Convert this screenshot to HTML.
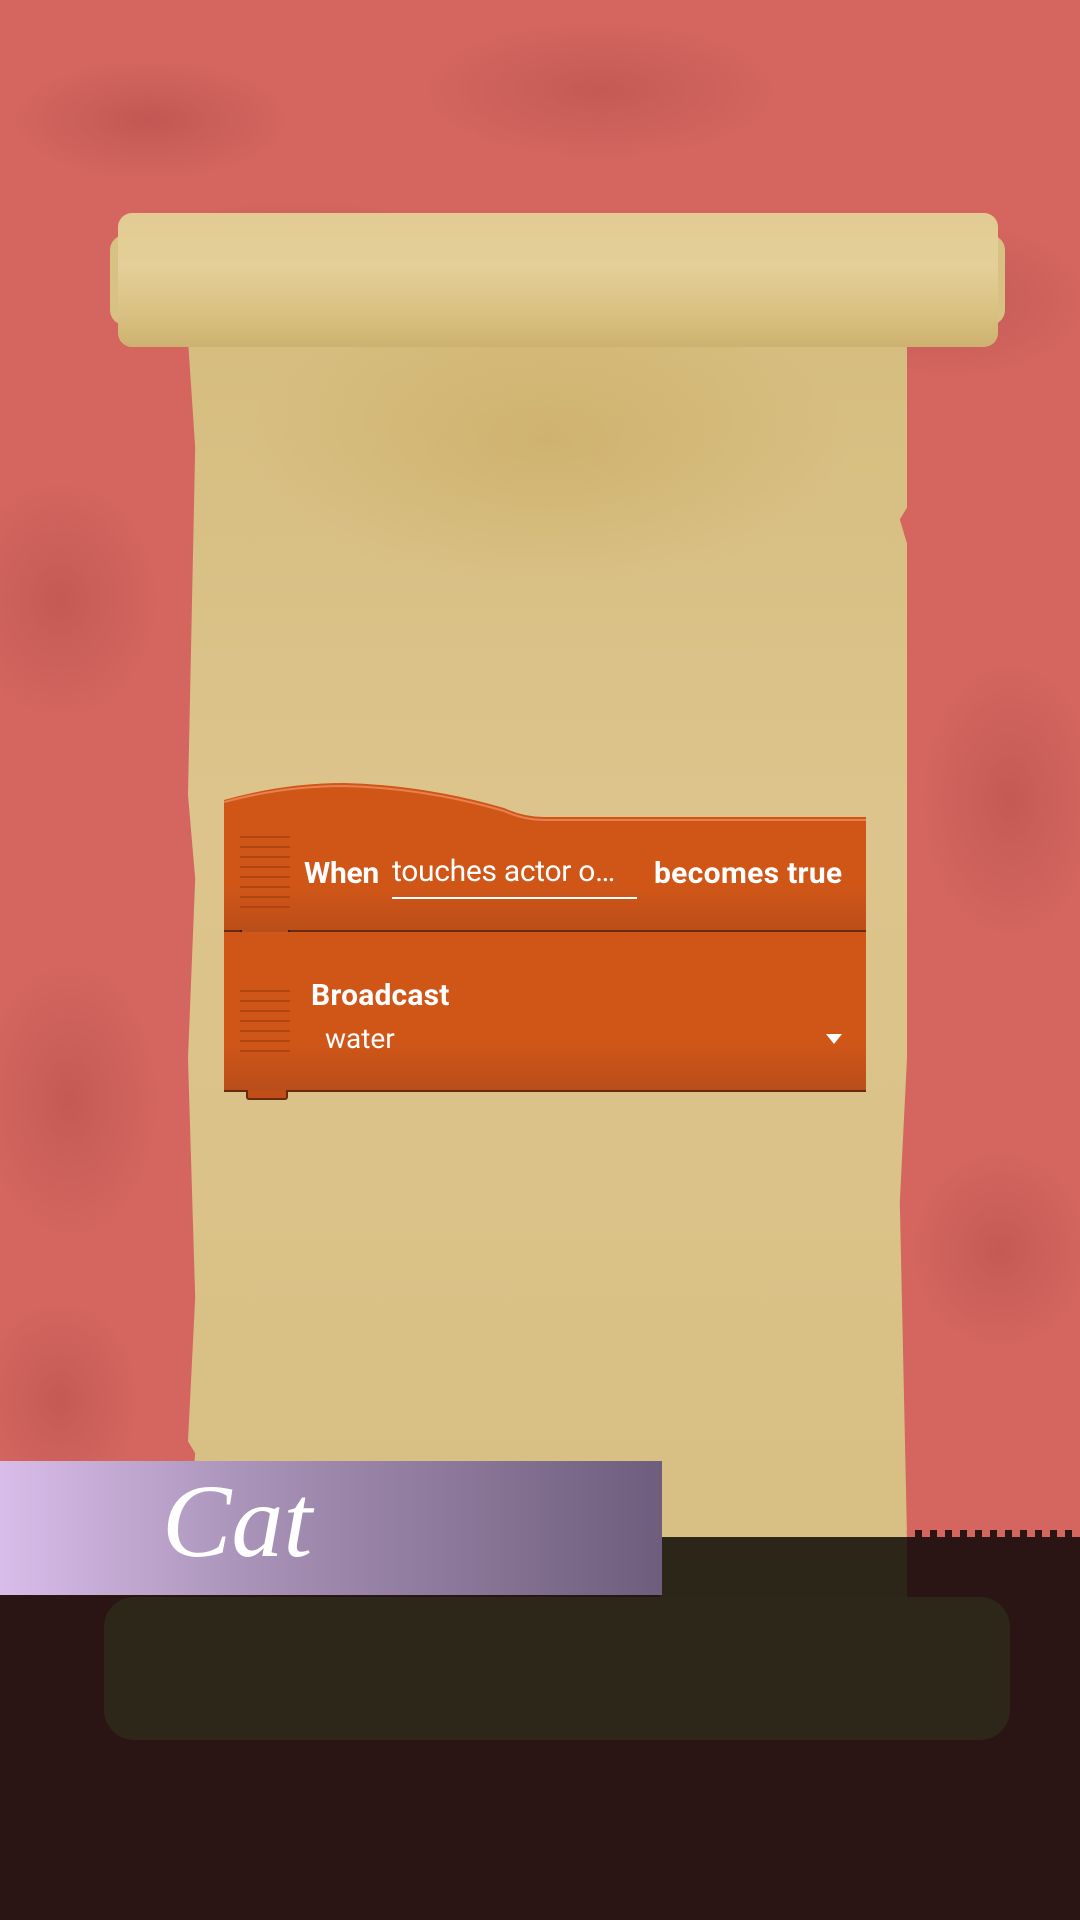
<!DOCTYPE html>
<html><head><meta charset="utf-8"><style>
html,body{margin:0;padding:0}
body{width:1080px;height:1920px;position:relative;overflow:hidden;background:#d4665f;font-family:"Roboto","Liberation Sans",sans-serif}
.abs{position:absolute}
.bgm{left:0;top:0;width:1080px;height:1537px;background:
radial-gradient(ellipse 140px 60px at 150px 120px,rgba(160,60,60,.35),transparent),
radial-gradient(ellipse 180px 70px at 600px 90px,rgba(160,60,60,.3),transparent),
radial-gradient(ellipse 160px 50px at 300px 250px,rgba(160,60,60,.3),transparent),
radial-gradient(ellipse 140px 80px at 950px 300px,rgba(160,60,60,.3),transparent),
radial-gradient(ellipse 100px 120px at 60px 600px,rgba(160,60,60,.3),transparent),
radial-gradient(ellipse 90px 140px at 1010px 800px,rgba(160,60,60,.3),transparent),
radial-gradient(ellipse 90px 140px at 70px 1100px,rgba(160,60,60,.3),transparent),
radial-gradient(ellipse 90px 100px at 1000px 1250px,rgba(160,60,60,.3),transparent),
radial-gradient(ellipse 80px 100px at 60px 1400px,rgba(160,60,60,.3),transparent),
#d4665f}
.dark{left:0;top:1537px;width:1080px;height:383px;background:#2a1414}
.saw{left:660px;top:1530px;width:420px;height:8px;background:repeating-linear-gradient(90deg,#2a1414 0 7px,transparent 7px 15px)}
.paper{left:188px;top:340px;width:719px;height:1197px;background:
radial-gradient(ellipse 300px 150px at 360px 100px,rgba(190,150,70,.3),transparent),
linear-gradient(#d6bd7f,#dcc48c 40%,#d8c084);
clip-path:polygon(0 0,100% 0,100% 14%,99% 15%,100% 17%,100% 60%,99% 72%,100% 100%,0 100%,1% 93%,0 92%,1% 80%,0 60%,1% 45%,0 38%,1% 9%)}
.paperdark{left:660px;top:1537px;width:247px;height:63px;background:#2c2619}
.roll{left:118px;top:213px;width:880px;height:134px;border-radius:14px;background:linear-gradient(#e2cc93,#e4cf98 40%,#d8be7e 80%,#cdb170)}
.rollend1{left:110px;top:235px;width:30px;height:90px;border-radius:15px;background:#d8c283}
.rollend2{left:975px;top:235px;width:30px;height:90px;border-radius:15px;background:#d8c283}
.shadow{left:104px;top:1597px;width:906px;height:143px;border-radius:30px;background:#2c2719}
.label{left:0;top:1461px;width:662px;height:134px;background:linear-gradient(90deg,#d8bde9,#a690b5 40%,#6e5d7c)}
.cat{left:162px;top:1462px;font-family:"Liberation Serif",serif;font-style:italic;color:#fff;font-size:104px;line-height:120px}
.b1{left:224px;top:783px;width:642px;height:150px}
.b2{left:224px;top:932px;width:642px;height:158px;background:linear-gradient(#d05618 0,#d05618 70%,#b94e1a 100%);border-bottom:2px solid #6a2a10}
.grip{width:50px}
.grip div{height:2px;background:#b04510;margin-bottom:8px}
.t{color:#fff;white-space:nowrap}
</style></head><body>
<div class="abs bgm"></div>
<div class="abs dark"></div>
<div class="abs saw"></div>
<div class="abs paper"></div>
<div class="abs paperdark"></div>
<div class="abs rollend1"></div><div class="abs rollend2"></div>
<div class="abs roll"></div>
<div class="abs shadow"></div>

<svg class="abs b1" viewBox="0 0 642 150" width="642" height="150">
<defs><linearGradient id="g" x1="0" y1="0" x2="0" y2="1"><stop offset="0" stop-color="#d05618"/><stop offset=".7" stop-color="#d05618"/><stop offset="1" stop-color="#b94e1a"/></linearGradient></defs>
<path d="M0 17 Q60 0 120 0 Q200 2 280 25 Q300 34 320 34 L642 34 L642 150 L0 150 Z" fill="url(#g)"/>
<path d="M0 19 Q60 3 120 3 Q200 5 280 28 Q300 37 320 37 L642 37" fill="none" stroke="#e88050" stroke-width="2"/>
</svg>
<div class="abs" style="left:224px;top:930px;width:642px;height:3px;background:#6a2a10"></div>
<div class="abs" style="left:240px;top:930px;width:46px;height:10px;background:#b94e1a;border:2px solid #3a1a30;border-top:none;border-radius:0 0 4px 4px"></div>
<div class="abs b2"></div>
<div class="abs" style="left:246px;top:1090px;width:38px;height:8px;background:#c04e18;border:2px solid #6a2a10;border-top:none;border-radius:0 0 3px 3px"></div>
<div class="abs grip" style="left:240px;top:836px"><div></div><div></div><div></div><div></div><div></div><div></div><div></div><div></div></div>
<div class="abs grip" style="left:240px;top:990px"><div></div><div></div><div></div><div></div><div></div><div></div><div></div></div>
<div class="abs t" style="left:304px;top:856px;font-size:30px;font-weight:bold;letter-spacing:-0.3px">When</div>
<div class="abs t" style="left:392px;top:854px;font-size:30px;letter-spacing:-0.3px">touches actor o…</div>
<div class="abs" style="left:392px;top:897px;width:245px;height:2px;background:#fff"></div>
<div class="abs t" style="left:654px;top:856px;font-size:30px;font-weight:bold;letter-spacing:0.3px">becomes true</div>
<div class="abs t" style="left:311px;top:978px;font-size:30px;font-weight:bold;letter-spacing:0.2px">Broadcast</div>
<div class="abs t" style="left:325px;top:1022px;font-size:28px">water</div>
<div class="abs" style="left:826px;top:1034px;width:0;height:0;border-left:8px solid transparent;border-right:8px solid transparent;border-top:10px solid #fff"></div>

<div class="abs label"></div>
<div class="abs cat">Cat</div>
</body></html>
